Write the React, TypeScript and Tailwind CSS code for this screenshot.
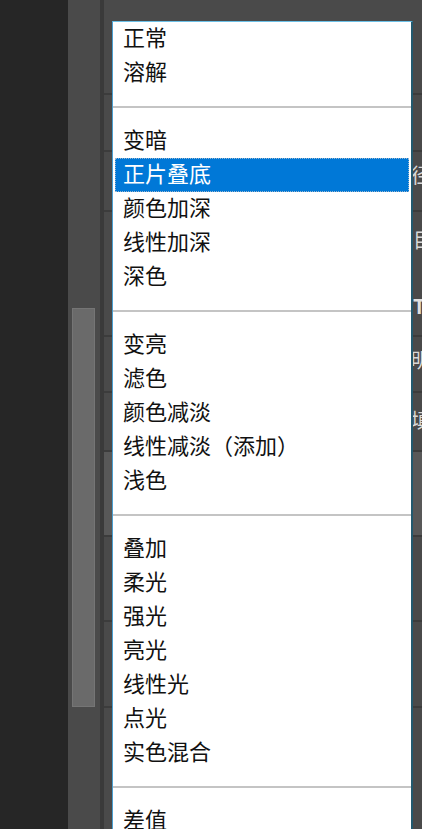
import React from "react";

type Item = { t: string; sep?: boolean; active?: boolean };

const items: Item[] = [
  { t: "正常" },
  { t: "溶解" },
  { t: "", sep: true },
  { t: "变暗" },
  { t: "正片叠底", active: true },
  { t: "颜色加深" },
  { t: "线性加深" },
  { t: "深色" },
  { t: "", sep: true },
  { t: "变亮" },
  { t: "滤色" },
  { t: "颜色减淡" },
  { t: "线性减淡（添加）" },
  { t: "浅色" },
  { t: "", sep: true },
  { t: "叠加" },
  { t: "柔光" },
  { t: "强光" },
  { t: "亮光" },
  { t: "线性光" },
  { t: "点光" },
  { t: "实色混合" },
  { t: "", sep: true },
  { t: "差值" },
];

const font = {
  fontFamily: '"Noto Sans CJK SC", "Noto Sans", sans-serif',
};

export default function App() {
  return (
    <div
      className="relative flex h-[829px] w-[422px] overflow-hidden bg-[#262626]"
      style={font}
    >
      {/* dark left area */}
      <div className="w-[68px] shrink-0 bg-[#262626]" />
      {/* scrollbar column */}
      <div className="flex w-[32px] shrink-0 flex-col bg-[#4a4a4a] pl-[4px] pt-[308px]">
        <div className="h-[399px] w-[23px] border border-[#757575] bg-[#6a6a6a]" />
      </div>
      {/* underlying layers panel */}
      <div className="flex w-[322px] shrink-0 flex-col border-l-[4px] border-[#3a3a3a] bg-[#4a4a4a] text-[20px] leading-[22px] text-[#d8d8d8]">
        <div className="h-[95px] border-b-2 border-[#3c3c3c]" />
        <div className="h-[57px] border-b-2 border-[#3c3c3c]" />
        <div className="h-[60px] whitespace-nowrap border-b-2 border-[#3c3c3c] pl-[307px] pt-[12px]">
          径向
        </div>
        <div className="flex h-[125px] flex-col whitespace-nowrap border-b-2 border-[#3c3c3c] pl-[309px] pt-[17px]">
          <span>目</span>
          <span className="mt-[44px] font-bold text-[#e0e0e0]">T</span>
        </div>
        <div className="h-[56px] whitespace-nowrap border-b-2 border-[#3c3c3c] pl-[307px] pt-[12px]">
          明度
        </div>
        <div className="h-[59px] whitespace-nowrap border-b-2 border-[#3c3c3c] pl-[307px] pt-[16px]">
          填充
        </div>
        <div className="h-[85px] border-b-2 border-[#3c3c3c] bg-[#585858]" />
        <div className="h-[85px] border-b-2 border-[#3c3c3c]" />
        <div className="h-[86px] border-b-2 border-[#3c3c3c]" />
        <div className="h-[121px]" />
      </div>

      {/* blend mode dropdown menu */}
      <div className="absolute left-[112px] top-[21px] h-[830px] w-[301px] border-l border-r-2 border-t border-l-[#4b9fd0] border-r-[#23596e] border-t-[#6cc0e6] bg-white">
        <div className="flex flex-col">
          {items.map((it, i) =>
            it.sep ? (
              <div key={i} className="flex h-[34px] items-center">
                <div className="h-[2px] w-full bg-[#c4c4c4]" />
              </div>
            ) : it.active ? (
              <div
                key={i}
                className="mx-[2px] flex h-[34px] items-center border border-dotted border-[#9bb7cf] bg-[#0078d7] pb-[6px] pl-[7px] text-[22px] text-white"
              >
                {it.t}
              </div>
            ) : (
              <div
                key={i}
                className="flex h-[34px] items-center pb-[6px] pl-[10px] text-[22px] text-[#111111]"
              >
                {it.t}
              </div>
            )
          )}
        </div>
      </div>
    </div>
  );
}
